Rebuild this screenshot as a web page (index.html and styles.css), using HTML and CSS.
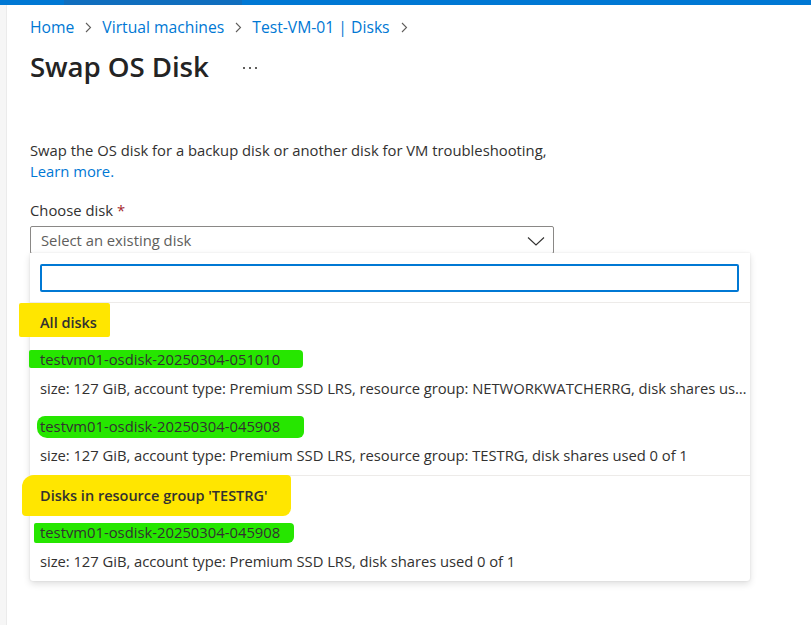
FILE: index.html
```html
<!DOCTYPE html>
<html lang="en">
<head>
<meta charset="utf-8">
<title>Swap OS Disk</title>
<link rel="stylesheet" href="styles.css">
</head>
<body>
<div class="topbar"><div class="topbar-seg"></div></div>
<div class="shell">
  <div class="rail"></div>
  <main class="main">
    <nav class="crumbs">
      <a class="crumb">Home</a>
      <svg class="sep" width="7" height="11" viewBox="0 0 7 11"><path d="M1 1l4.5 4.5L1 10" fill="none" stroke="#605e5c" stroke-width="1.1"/></svg>
      <a class="crumb">Virtual machines</a>
      <svg class="sep" width="7" height="11" viewBox="0 0 7 11"><path d="M1 1l4.5 4.5L1 10" fill="none" stroke="#605e5c" stroke-width="1.1"/></svg>
      <a class="crumb">Test-VM-01 | Disks</a>
      <svg class="sep" width="7" height="11" viewBox="0 0 7 11"><path d="M1 1l4.5 4.5L1 10" fill="none" stroke="#605e5c" stroke-width="1.1"/></svg>
    </nav>
    <header class="title-row">
      <h1 class="title">Swap OS Disk</h1>
      <svg class="more" width="16" height="4" viewBox="0 0 16 4"><rect x="1" y="1" width="2" height="2" fill="#605e5c"/><rect x="7" y="1" width="2" height="2" fill="#605e5c"/><rect x="13" y="1" width="2" height="2" fill="#605e5c"/></svg>
    </header>
    <p class="desc">Swap the OS disk for a backup disk or another disk for VM troubleshooting,<br><a class="link">Learn more.</a></p>
    <div class="field">
      <label class="label">Choose disk <span class="req">*</span></label>
      <div class="select">
        <span class="placeholder">Select an existing disk</span>
        <svg class="chev" width="18" height="10" viewBox="0 0 18 10"><path d="M1 1.5l8 7.5 8-7.5" fill="none" stroke="#323130" stroke-width="1.1"/></svg>
      </div>
      <div class="panel">
        <div class="search-wrap"><div class="search"></div></div>
        <div class="group">
          <div class="group-head"><span class="hl hl-y1">All disks</span></div>
          <div class="item">
            <div class="name"><span class="hl hl-g1">testvm01-osdisk-20250304-051010</span></div>
            <div class="meta">size: 127 GiB, account type: Premium SSD LRS, resource group: NETWORKWATCHERRG, disk shares used 0 of 1</div>
          </div>
          <div class="item">
            <div class="name"><span class="hl hl-g2">testvm01-osdisk-20250304-045908</span></div>
            <div class="meta">size: 127 GiB, account type: Premium SSD LRS, resource group: TESTRG, disk shares used 0 of 1</div>
          </div>
        </div>
        <div class="group">
          <div class="group-head"><span class="hl hl-y2">Disks in resource group 'TESTRG'</span></div>
          <div class="item">
            <div class="name"><span class="hl hl-g3">testvm01-osdisk-20250304-045908</span></div>
            <div class="meta">size: 127 GiB, account type: Premium SSD LRS, disk shares used 0 of 1</div>
          </div>
        </div>
      </div>
    </div>
  </main>
</div>
</body>
</html>
```
FILE: styles.css
```css
* { box-sizing: border-box; }
html, body { margin: 0; padding: 0; background: #fff; }
body {
  font-family: "Open Sans", "Noto Sans", sans-serif;
  color: #323130;
  font-size: 14.8px;
  width: 811px;
  height: 625px;
  overflow: hidden;
}
.topbar {
  height: 5px;
  background: #0078d4;
}
.topbar-seg {
  margin-left: 64px;
  width: 178px;
  height: 5px;
  background: #106ebe;
}
.shell {
  display: flex;
  height: 620px;
}
.rail {
  width: 7px;
  flex: none;
  background: #f6f6f6;
  border-right: 1px solid #ebebeb;
}
.main {
  padding-left: 23px;
  flex: 1;
}
.crumbs {
  display: flex;
  align-items: center;
  height: 20px;
  margin-top: 12px;
  font-size: 15.7px;
}
.crumb { color: #0078d4; text-decoration: none; }
.sep { margin: 1px 10px 0 11px; }
.title-row {
  display: flex;
  align-items: center;
  margin-top: 9px;
  height: 40px;
}
.title {
  margin: 0;
  font-size: 27.7px;
  font-weight: 600;
  color: #242424;
  letter-spacing: -0.1px;
}
.more { margin-left: 33px; margin-top: 4px; }
.desc {
  margin: 54px 0 0;
  line-height: 21px;
}
.link { color: #0078d4; }
.field { margin-top: 18px; }
.label { display: block; line-height: 20px; }
.req { color: #a4262c; }
.select {
  margin-top: 6px;
  width: 524px;
  height: 28px;
  border: 1px solid #8a8886;
  border-radius: 2px;
  display: flex;
  align-items: center;
  justify-content: space-between;
  padding: 0 8px 0 10px;
}
.placeholder { color: #605e5c; }
.chev { margin-top: 1px; }
.panel {
  width: 720px;
  background: #fff;
  border-radius: 0 0 3px 3px;
  box-shadow: 0 3px 7px rgba(0,0,0,0.13), 0 0 2px rgba(0,0,0,0.10);
  margin-top: -1px;
}
.search-wrap {
  padding: 11px 11px 10px 10px;
  border-bottom: 1px solid #edebe9;
}
.search {
  height: 28px;
  border: 2px solid #0078d4;
  border-radius: 2px;
}
.group + .group { border-top: 1px solid #edebe9; }
.group-head {
  height: 38px;
  display: flex;
  align-items: center;
  padding-left: 10px;
  font-weight: 600;
  font-size: 14.5px;
}
.item {
  padding: 8px 1px 10px 10px;
}
.name { line-height: 20px; }
.meta {
  margin-top: 9px;
  line-height: 20px;
  white-space: nowrap;
  overflow: hidden;
  text-overflow: ellipsis;
  letter-spacing: -0.05px;
}
.hl { position: relative; z-index: 0; }
.hl::before {
  content: "";
  position: absolute;
  z-index: -1;
}
.hl-y1::before { left: -21px; right: -13px; top: -10px; bottom: -5px; background: #ffe600; border-radius: 2px; }
.hl-g1::before { left: -11px; right: -23px; top: 1px; bottom: 1px; background: #26e600; border-radius: 2px 4px 4px 2px; }
.hl-g2::before { left: -3px; right: -24px; top: 0px; bottom: -2px; background: #26e600; border-radius: 8px 4px 6px 10px; }
.hl-y2::before { left: -18px; right: -23px; top: -11px; bottom: -11px; background: #ffe600; border-radius: 12px 4px 8px 4px; }
.hl-g3::before { left: -6px; right: -14px; top: 1px; bottom: -1px; background: #26e600; border-radius: 2px 4px 6px 2px; }
```
